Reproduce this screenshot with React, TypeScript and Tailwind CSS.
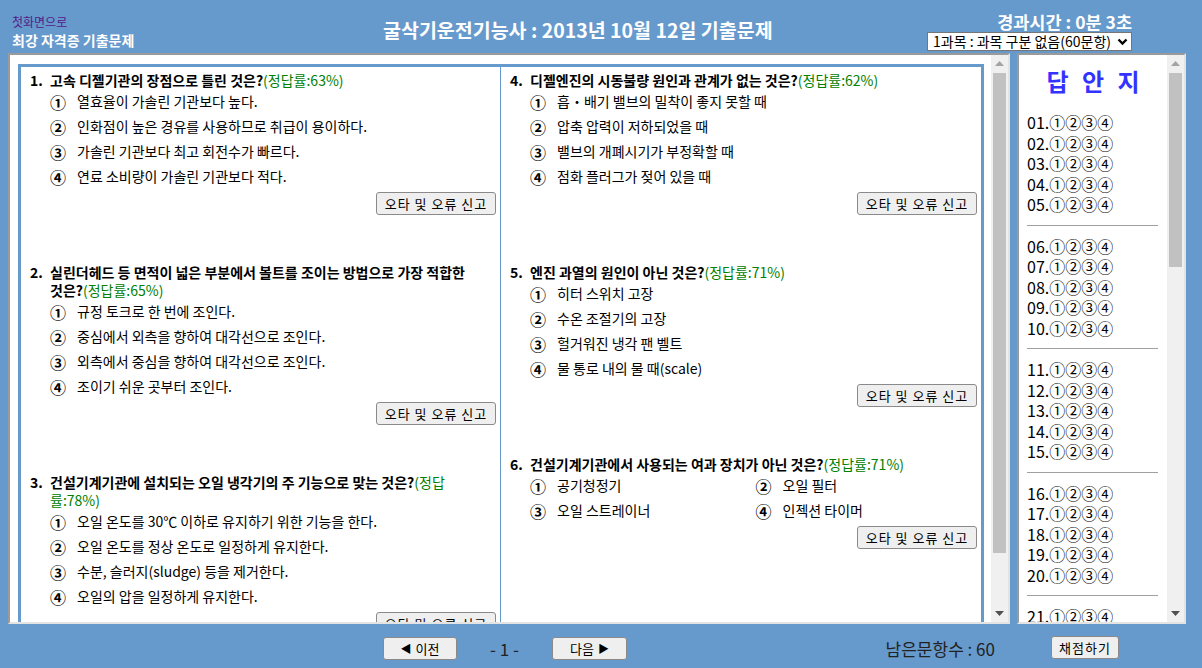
import type { ReactNode } from 'react'

type Question = {
  no: number
  title: ReactNode[]
  options: string[]
  twoCols?: boolean
}

const Rate = ({ children }: { children: ReactNode }) => (
  <span className="font-normal text-[#008000]">{children}</span>
)

const leftQuestions: Question[] = [
  {
    no: 1,
    title: [<>고속 디젤기관의 장점으로 틀린 것은?<Rate>(정답률:63%)</Rate></>],
    options: [
      '열효율이 가솔린 기관보다 높다.',
      '인화점이 높은 경유를 사용하므로 취급이 용이하다.',
      '가솔린 기관보다 최고 회전수가 빠르다.',
      '연료 소비량이 가솔린 기관보다 적다.',
    ],
  },
  {
    no: 2,
    title: [
      <>실린더헤드 등 면적이 넓은 부분에서 볼트를 조이는 방법으로 가장 적합한</>,
      <>것은?<Rate>(정답률:65%)</Rate></>,
    ],
    options: [
      '규정 토크로 한 번에 조인다.',
      '중심에서 외측을 향하여 대각선으로 조인다.',
      '외측에서 중심을 향하여 대각선으로 조인다.',
      '조이기 쉬운 곳부터 조인다.',
    ],
  },
  {
    no: 3,
    title: [
      <>건설기계기관에 설치되는 오일 냉각기의 주 기능으로 맞는 것은?<Rate>(정답</Rate></>,
      <Rate>률:78%)</Rate>,
    ],
    options: [
      '오일 온도를 30℃ 이하로 유지하기 위한 기능을 한다.',
      '오일 온도를 정상 온도로 일정하게 유지한다.',
      '수분, 슬러지(sludge) 등을 제거한다.',
      '오일의 압을 일정하게 유지한다.',
    ],
  },
]

const rightQuestions: Question[] = [
  {
    no: 4,
    title: [<>디젤엔진의 시동불량 원인과 관계가 없는 것은?<Rate>(정답률:62%)</Rate></>],
    options: [
      '흡・배기 밸브의 밀착이 좋지 못할 때',
      '압축 압력이 저하되었을 때',
      '밸브의 개폐시기가 부정확할 때',
      '점화 플러그가 젖어 있을 때',
    ],
  },
  {
    no: 5,
    title: [<>엔진 과열의 원인이 아닌 것은?<Rate>(정답률:71%)</Rate></>],
    options: ['히터 스위치 고장', '수온 조절기의 고장', '헐거워진 냉각 팬 벨트', '물 통로 내의 물 때(scale)'],
  },
  {
    no: 6,
    title: [<>건설기계기관에서 사용되는 여과 장치가 아닌 것은?<Rate>(정답률:71%)</Rate></>],
    options: ['공기청정기', '오일 필터', '오일 스트레이너', '인젝션 타이머'],
    twoCols: true,
  },
]

const circled = ['①', '②', '③', '④']

function WinButton({ children, className = '' }: { children: ReactNode; className?: string }) {
  return (
    <button
      className={`flex h-[23px] items-center justify-center rounded-[3px] border border-[#8a8a8a] bg-[#efefef] text-[13px] leading-none text-black ${className}`}
    >
      {children}
    </button>
  )
}

function QuestionBlock({ q }: { q: Question }) {
  return (
    <div className="mb-[48px]">
      <div className="flex text-[14px] font-bold leading-[18px] text-black">
        <span className="w-[20px] shrink-0">{q.no}.</span>
        <div>
          {q.title.map((line, i) => (
            <div key={i} className="whitespace-nowrap">
              {line}
            </div>
          ))}
        </div>
      </div>
      <div className={q.twoCols ? 'grid grid-cols-2 pl-[20px]' : 'pl-[20px]'}>
        {q.options.map((opt, i) => (
          <div key={i} className="flex h-[25px] items-center text-[14px] text-black">
            <span className="w-[27px] shrink-0 text-[16px] font-bold leading-none">{circled[i]}</span>
            <span className="whitespace-nowrap">{opt}</span>
          </div>
        ))}
      </div>
      <div className="mt-[3px] flex justify-end pr-[4px]">
        <WinButton className="w-[120px] tracking-[1px]">오타 및 오류 신고</WinButton>
      </div>
    </div>
  )
}

function ScrollBar({ thumb }: { thumb: string }) {
  return (
    <div className="flex w-[17px] shrink-0 flex-col bg-[#f0f0f0]">
      <div className="flex h-[17px] items-center justify-center">
        <svg width="9" height="5" viewBox="0 0 9 5">
          <polygon points="0,5 4.5,0 9,5" fill="#a3a3a3" />
        </svg>
      </div>
      <div className="flex-1 px-[2px] pt-[1px]">
        <div className={`bg-[#c1c1c1] ${thumb}`} />
      </div>
      <div className="flex h-[17px] items-center justify-center">
        <svg width="9" height="5" viewBox="0 0 9 5">
          <polygon points="0,0 9,0 4.5,5" fill="#505050" />
        </svg>
      </div>
    </div>
  )
}

function AnswerSheet() {
  const groups = Array.from({ length: 12 }, (_, g) => Array.from({ length: 5 }, (_, r) => g * 5 + r + 1))
  return (
    <div className="flex-1 overflow-hidden bg-white pl-[8px] pt-[11px]">
      <div className="pl-[4px] pr-[8px] text-center text-[24px] font-bold leading-[30px] tracking-[4px] text-[#3333ff]">
        답 안 지
      </div>
      <div className="mt-[16px] pr-[9px]">
        {groups.map((g, gi) => (
          <div key={gi}>
            {g.map((n) => (
              <div key={n} className="flex h-[20.5px] items-center whitespace-nowrap text-[16px] text-black">
                <span>{String(n).padStart(2, '0')}.</span>
                <span>①②③④</span>
              </div>
            ))}
            <div className="my-[10px] border-t border-[#a0a0a0]" />
          </div>
        ))}
      </div>
    </div>
  )
}

export default function App() {
  return (
    <div className="flex h-[668px] w-[1202px] flex-col overflow-hidden bg-[#6699cc] font-['Noto_Sans_CJK_KR','Noto_Sans',sans-serif]">
      {/* header */}
      <div className="flex h-[53px] shrink-0">
        <div className="flex w-[383px] shrink-0 flex-col gap-[2px] pl-[12px] pt-[14px]">
          <a className="text-[12px] leading-[16px] text-[#551a8b]">첫화면으로</a>
          <span className="text-[14px] font-bold leading-[16px] text-white">최강 자격증 기출문제</span>
        </div>
        <div className="pt-[18px] text-[19.5px] font-bold leading-[24px] text-white">
          굴삭기운전기능사 : 2013년 10월 12일 기출문제
        </div>
        <div className="ml-auto mr-[70px] flex flex-col items-end pt-[11px]">
          <div className="text-[17.5px] font-bold leading-[21px] text-white">경과시간 : 0분 3초</div>
          <div className="flex h-[19px] w-[205px] items-center justify-between border border-[#767676] bg-white pl-[5px] pr-[3px] text-[14px] text-black">
            <span>1과목 : 과목 구분 없음(60문항)</span>
            <svg width="11" height="8" viewBox="0 0 11 8">
              <polyline points="1.5,1.5 5.5,5.5 9.5,1.5" fill="none" stroke="#000" strokeWidth="2.4" />
            </svg>
          </div>
        </div>
      </div>

      {/* main */}
      <div className="flex h-[571px] shrink-0 gap-[7px] pl-[8px]">
        <div className="flex w-[1002px] shrink-0 border-2 border-b-[#e3e3e3] border-l-[#9a9a9a] border-r-[#e3e3e3] border-t-[#9a9a9a] bg-white">
          <div className="flex-1 overflow-hidden pl-[8px] pr-[7px] pt-[9px]">
            <div className="flex h-[700px] border-[3px] border-[#6699cc]">
              <div className="w-[479px] shrink-0 pl-[9px] pt-[4px]">
                {leftQuestions.map((q) => (
                  <QuestionBlock key={q.no} q={q} />
                ))}
              </div>
              <div className="w-px shrink-0 bg-[#6699cc]" />
              <div className="flex-1 pl-[9px] pt-[4px]">
                {rightQuestions.map((q) => (
                  <QuestionBlock key={q.no} q={q} />
                ))}
              </div>
            </div>
          </div>
          <ScrollBar thumb="h-[480px]" />
        </div>

        <div className="flex w-[169px] shrink-0 border-2 border-b-[#e3e3e3] border-l-[#9a9a9a] border-r-[#e3e3e3] border-t-[#9a9a9a] bg-white">
          <AnswerSheet />
          <ScrollBar thumb="h-[194px]" />
        </div>
      </div>

      {/* footer */}
      <div className="flex flex-1 items-start pt-[12px]">
        <div className="ml-[8px] grid w-[1002px] grid-cols-[1fr_auto_1fr] items-center pr-[8px]">
          <div />
          <div className="flex items-center">
            <WinButton className="w-[74px] gap-[4px]">
              <span className="text-[11px]">◀</span>
              <span>이전</span>
            </WinButton>
            <span className="mx-[33px] text-[17px] text-[#222]">- 1 -</span>
            <WinButton className="w-[75px] gap-[4px]">
              <span>다음</span>
              <span className="text-[11px]">▶</span>
            </WinButton>
          </div>
          <div className="flex justify-end pr-[7px] text-[17px] text-[#222]">남은문항수 : 60</div>
        </div>
        <WinButton className="ml-[41px] w-[68px] tracking-[1px]">채점하기</WinButton>
      </div>
    </div>
  )
}
